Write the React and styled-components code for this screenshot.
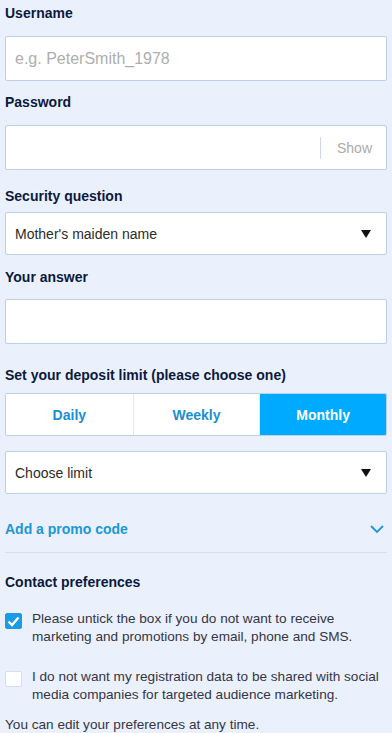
import React from 'react'
import styled, { createGlobalStyle } from 'styled-components'

const Global = createGlobalStyle`
  html, body {
    margin: 0;
    padding: 0;
    background: #eaf1fd;
    font-family: "Liberation Sans", Arial, sans-serif;
  }
`

const Form = styled.div`
  padding: 4px 5px 0 5px;
  display: flex;
  flex-direction: column;
`

const Label = styled.div`
  font-size: 14px;
  line-height: 18px;
  font-weight: 700;
  color: #0d1a3d;
  margin-top: ${p => p.$top ?? 0}px;
  margin-bottom: ${p => p.$bottom ?? 14}px;
`

const Box = styled.div`
  height: ${p => p.$h || 45}px;
  box-sizing: border-box;
  background: #fff;
  border: 1px solid #bccfeb;
  border-radius: 2px;
  display: flex;
  align-items: center;
  padding: 0 15px 0 9px;
  font-size: ${p => p.$size || 14}px;
  color: ${p => p.$muted ? '#aeaeae' : '#2b2b2b'};
  margin-top: ${p => p.$top ?? 0}px;
`

const Grow = styled.div`
  flex: 1;
`

const ShowBtn = styled.div`
  border-left: 1px solid #cad6e8;
  height: 22px;
  display: flex;
  align-items: center;
  padding-left: 16px;
  margin-right: -5px;
  padding-right: 4px;
  color: #ababab;
  font-size: 14px;
`

const Segments = styled.div`
  display: grid;
  grid-template-columns: 1fr 1fr 1fr;
  height: 43px;
  border: 1px solid #bccfeb;
  border-radius: 2px;
  box-sizing: border-box;
  background: #fff;
  overflow: hidden;
`

const Segment = styled.div`
  display: flex;
  align-items: center;
  justify-content: center;
  font-size: 14px;
  font-weight: 700;
  color: ${p => p.$active ? '#fff' : '#1b8fd0'};
  background: ${p => p.$active ? '#00aaff' : '#fff'};
  border-left: ${p => p.$first ? 'none' : '1px solid #dfe8f4'};
`

const Promo = styled.div`
  display: flex;
  align-items: center;
  justify-content: space-between;
  margin-top: 26px;
  font-size: 14px;
  line-height: 18px;
  font-weight: 700;
  color: #1b97d6;
  padding-right: 3px;
`

const Divider = styled.div`
  height: 1px;
  background: #d5dfee;
  margin-top: 14px;
`

const CheckRow = styled.div`
  display: flex;
  align-items: flex-start;
  gap: 10px;
  margin-top: ${p => p.$top ?? 0}px;
`

const Check = styled.div`
  width: 17px;
  height: 16px;
  flex: none;
  box-sizing: border-box;
  border-radius: 2px;
  margin-top: 3px;
  background: ${p => p.$on ? '#1a9be6' : '#fff'};
  border: 1px solid ${p => p.$on ? '#1a9be6' : '#d3def0'};
  display: flex;
  align-items: center;
  justify-content: center;
`

const Text = styled.div`
  font-size: 13.6px;
  line-height: 18px;
  color: #353545;
  margin-top: ${p => p.$top ?? 0}px;
`

const Arrow = () => (
  <svg width="10" height="8" viewBox="0 0 10 8"><polygon points="0,0 10,0 5,8" fill="#111" /></svg>
)

const App = () => {
  return (
    <Form>
      <Global />
      <Label>Username</Label>
      <Box $muted $size={16}>e.g. PeterSmith_1978</Box>

      <Label $top={12}>Password</Label>
      <Box>
        <Grow />
        <ShowBtn>Show</ShowBtn>
      </Box>

      <Label $top={17} $bottom={7}>Security question</Label>
      <Box $h={43}>
        <Grow>Mother's maiden name</Grow>
        <Arrow />
      </Box>

      <Label $top={13} $bottom={13}>Your answer</Label>
      <Box />

      <Label $top={22} $bottom={9}>Set your deposit limit (please choose one)</Label>
      <Segments>
        <Segment $first>Daily</Segment>
        <Segment>Weekly</Segment>
        <Segment $active>Monthly</Segment>
      </Segments>
      <Box $h={43} $top={15}>
        <Grow>Choose limit</Grow>
        <Arrow />
      </Box>

      <Promo>
        <span>Add a promo code</span>
        <svg width="14" height="9" viewBox="0 0 14 9"><polyline points="1,1 7,7 13,1" fill="none" stroke="#1b97d6" strokeWidth="1.8" /></svg>
      </Promo>
      <Divider />

      <Label $top={20} $bottom={0}>Contact preferences</Label>
      <CheckRow $top={19}>
        <Check $on>
          <svg width="13" height="11" viewBox="0 0 13 11"><polyline points="1.5,5.5 5,9 11.5,1.5" fill="none" stroke="#fff" strokeWidth="2.4" /></svg>
        </Check>
        <Text>Please untick the box if you do not want to receive marketing and promotions by email, phone and SMS.</Text>
      </CheckRow>
      <CheckRow $top={22}>
        <Check />
        <Text>I do not want my registration data to be shared with social media companies for targeted audience marketing.</Text>
      </CheckRow>
      <Text $top={12}>You can edit your preferences at any time.</Text>
    </Form>
  )
}

export default App
